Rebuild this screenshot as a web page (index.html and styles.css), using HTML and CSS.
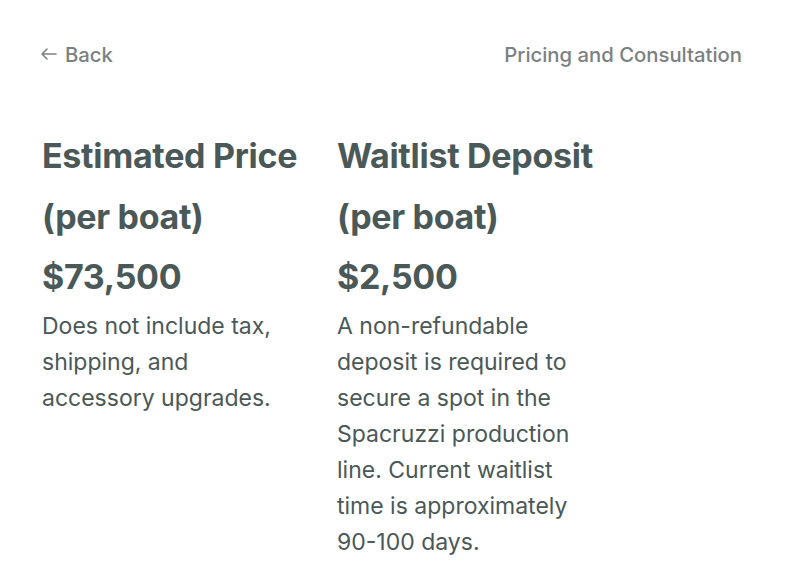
FILE: index.html
```html
<!DOCTYPE html>
<html lang="en">
<head>
    <meta charset="UTF-8">
    <title>Pricing and Consultation</title>
    <link rel="stylesheet" href="styles.css">
</head>
<body>

<header class="top">
    <a class="back" href="#">
        <svg width="18" height="14" viewBox="0 0 18 14" fill="none" stroke="currentColor" stroke-width="1.5" stroke-linecap="round" stroke-linejoin="round">
            <path d="M16 7H2M7 2L2 7l5 5"/>
        </svg>
        Back
    </a>
    <div class="page-title">Pricing and Consultation</div>
</header>

<main class="pricing">
    <div class="col">
        <h2>Estimated Price<br>(per boat)</h2>
        <div class="price">$73,500</div>
        <p>Does not include tax, shipping, and accessory upgrades.</p>
    </div>
    <div class="col">
        <h2>Waitlist Deposit<br>(per boat)</h2>
        <div class="price">$2,500</div>
        <p>A non-refundable deposit is required to secure a spot in the Spacruzzi production line. Current waitlist time is approximately 90-100 days.</p>
    </div>
</main>

</body>
</html>
```

FILE: styles.css
```css
* {
    box-sizing: border-box;
}

body {
    font-family: Inter, "Noto Sans", sans-serif;
    margin: 0;
    padding: 40px 50px 0 42px;
    background: #fff;
    color: #4a5858;
}

.top {
    display: flex;
    justify-content: space-between;
    align-items: center;
    height: 28px;
    font-size: 20.3px;
    font-weight: 500;
    color: #7b8181;
}

.back {
    display: flex;
    align-items: center;
    gap: 7px;
    color: inherit;
    text-decoration: none;
    margin-left: -2px;
}

.pricing {
    display: grid;
    grid-template-columns: 262px 262px;
    column-gap: 33px;
    margin-top: 57px;
}

h2, .price {
    margin: 0;
    font-size: 34px;
    font-weight: 700;
    line-height: 61px;
    letter-spacing: -0.3px;
}

.price {
    line-height: 60px;
}

p {
    margin: 1px 0 0;
    font-size: 23px;
    line-height: 36px;
}
```
